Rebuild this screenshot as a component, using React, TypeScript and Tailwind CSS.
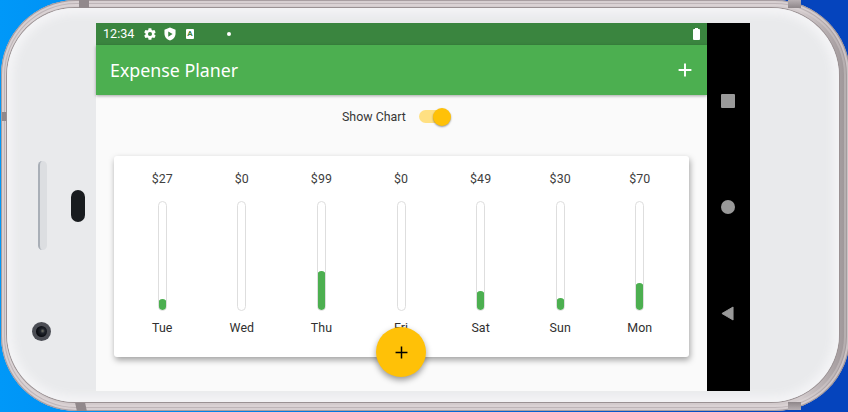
const days = [
  { day: 'Tue', amount: 27 },
  { day: 'Wed', amount: 0 },
  { day: 'Thu', amount: 99 },
  { day: 'Fri', amount: 0 },
  { day: 'Sat', amount: 49 },
  { day: 'Sun', amount: 30 },
  { day: 'Mon', amount: 70 },
];

const total = days.reduce((sum, d) => sum + d.amount, 0);

function DayBar({ day, amount }: { day: string; amount: number }) {
  return (
    <div className="flex flex-1 flex-col items-center text-[12.4px] leading-[14px] text-[#404040]">
      <div className="tracking-[0.1px]">${amount}</div>
      <div className="mt-[15px] flex h-[110px] w-[9px] flex-col justify-end overflow-hidden rounded-full border border-[#dedede] bg-white">
        <div
          className="-mx-px rounded-full bg-[#4caf50]"
          style={{ height: `${(amount / total) * 108}px` }}
        />
      </div>
      <div className="mt-[10px] tracking-[0.1px] text-[#303030]">{day}</div>
    </div>
  );
}

function Plus({ className }: { className: string }) {
  return (
    <svg viewBox="0 0 14 14" className={className} fill="none" stroke="currentColor">
      <path d="M7 .6v12.8M.6 7h12.8" />
    </svg>
  );
}

function StatusBar() {
  return (
    <div className="flex h-[22px] items-center bg-[#3a853f] pl-[7px] pr-[7px] text-white">
      <span className="w-[32px] pt-px text-[12.6px] leading-none">12:34</span>
      <svg viewBox="0 0 24 24" className="ml-[8px] h-[14px] w-[14px]" fill="currentColor">
        <path d="M19.4 13a7.5 7.5 0 0 0 0-2l2.1-1.6a.5.5 0 0 0 .1-.6l-2-3.5a.5.5 0 0 0-.6-.2l-2.500 1a7.300 7.300 0 0 0-1.700-1l-.4-2.700a.5.5 0 0 0-.5-.4h-4a.5.5 0 0 0-.5.4L9 5.100a7.300 7.300 0 0 0-1.700 1l-2.500-1a.5.5 0 0 0-.6.2l-2 3.500a.5.5 0 0 0 .1.6L4.500 11a7.500 7.500 0 0 0 0 2l-2.200 1.600a.5.5 0 0 0-.1.6l2 3.500c.1.2.4.3.6.2l2.500-1c.5.4 1.100.7 1.700 1l.4 2.700c0 .2.2.4.5.4h4c.2 0 .5-.2.5-.4l.4-2.700a7.300 7.300 0 0 0 1.700-1l2.500 1c.2.1.5 0 .6-.2l2-3.500a.5.5 0 0 0-.1-.6L19.400 13ZM12 15.500a3.500 3.500 0 1 1 0-7 3.500 3.500 0 0 1 0 7Z" fillRule="evenodd" />
      </svg>
      <svg viewBox="0 0 24 24" className="ml-[6px] h-[14px] w-[14px]" fill="currentColor">
        <path d="M12 1 2.500 4.500V11c0 5.500 4 10.500 9.500 12 5.500-1.500 9.500-6.500 9.500-12V4.500L12 1ZM9 7.500l7.500 4.500L9 16.500v-9Z" fillRule="evenodd" />
      </svg>
      <div className="ml-[9px] flex h-[10px] w-[8px] flex-col items-center rounded-[1px] bg-white">
        <span className="text-[8px] font-bold leading-[9px] text-[#3a853f]">A</span>
      </div>
      <div className="ml-[33px] h-[4px] w-[4px] rounded-full bg-white" />
      <div className="ml-auto flex w-[7px] flex-col items-center">
        <div className="h-px w-[3px] bg-white" />
        <div className="h-[11px] w-[7px] rounded-[1px] bg-white" />
      </div>
    </div>
  );
}

function Screen() {
  return (
    <div className="relative flex h-[368px] w-[611px] flex-col bg-[#fafafa]">
      <StatusBar />
      <header className="z-10 flex h-[50px] items-center justify-between bg-[#4caf50] pl-[14px] pr-[15px] text-white shadow-[0_1px_3px_rgba(0,0,0,0.35)]">
        <h1 className="pt-px font-[family-name:'Noto_Sans','Open_Sans',sans-serif] text-[17.8px] leading-none">Expense Planer</h1>
        <Plus className="h-[14px] w-[14px] stroke-[1.9]" />
      </header>
      <div className="flex h-[43px] items-center pl-[246px] text-[12.4px] text-[#363636]">
        <span className="w-[65px] whitespace-nowrap pt-px">Show Chart</span>
        <div className="ml-[12px] flex h-[13px] w-[32px] items-center justify-end rounded-l-full bg-[linear-gradient(90deg,#ffe082_22px,transparent_22px)]">
          <div className="h-[18px] w-[18px] rounded-full bg-[#ffc107] shadow-[0_1px_2px_rgba(0,0,0,0.4)]" />
        </div>
      </div>
      <section className="ml-[18px] mt-[18px] flex h-[201px] w-[575px] rounded-[3px] bg-white pl-[8.5px] pr-[9.5px] pt-[16px] shadow-[1px_3px_6px_rgba(0,0,0,0.36)]">
        {days.map((d) => (
          <DayBar key={d.day} {...d} />
        ))}
      </section>
      <button className="absolute bottom-[14px] left-[280px] flex h-[50px] w-[50px] items-center justify-center rounded-full bg-[#ffc107] text-black shadow-[0_3px_6px_rgba(0,0,0,0.4)]">
        <Plus className="h-[13px] w-[13px] stroke-[1.6]" />
      </button>
    </div>
  );
}

function NavBar() {
  return (
    <div className="flex h-[368px] w-[43px] flex-col items-center justify-between bg-black pb-[70px] pr-px pt-[71px]">
      <div className="h-[14px] w-[14px] rounded-[1px] bg-[#999]" />
      <div className="h-[14px] w-[14px] rounded-full bg-[#999]" />
      <svg viewBox="0 0 14 16" className="mr-[2px] h-[15px] w-[13px]">
        <path d="M13 1v14L1 8Z" fill="#999" stroke="#999" strokeLinejoin="round" />
      </svg>
    </div>
  );
}

export default function App() {
  return (
    <div className="relative h-[412px] w-[848px] overflow-hidden bg-[linear-gradient(90deg,#0098f8_0,#0090f4_90px,#0544bd_780px)] font-[family-name:Roboto,sans-serif]">
      <div className="ml-px h-[411px] w-[849px] rounded-[75px] bg-[linear-gradient(90deg,#d3cbcd_0,#d3cbcd_800px,#a0989a_843px)] pb-[9px] pl-[6px] pr-[11px] pt-[8px] shadow-[inset_0_0_0_1px_rgba(110,98,102,0.45),inset_0_0_0_3px_rgba(235,228,230,0.55),inset_0_0_0_4px_rgba(120,108,112,0.28),inset_0_0_0_6px_rgba(235,228,230,0.3)]">
        <div className="flex h-[394px] w-[832px] rounded-[68px] bg-[#e9eaec] pt-[15px] shadow-[0_0_0_1px_#9a9193,inset_0_0_8px_6px_#f4f4f6]">
          <div className="flex w-[89px] shrink-0">
            <div className="ml-[31px] flex w-[20px] flex-col">
              <div className="mt-[138px] h-[89px] w-[9px] rounded-full border-l-2 border-[#a9afb7] bg-[#dcdee1]" />
              <div className="-ml-[6px] mt-[72px] flex h-[19px] w-[19px] items-center justify-center rounded-full bg-[#4b4d54]">
                <div className="h-[11px] w-[11px] rounded-full bg-[radial-gradient(circle_at_60%_45%,#77776a_0,#20242c_25%,#090b10_65%)]" />
              </div>
            </div>
            <div className="ml-[13px] mt-[167px] h-[32px] w-[14px] rounded-full bg-[#191c1f]" />
          </div>
          <Screen />
          <NavBar />
        </div>
      </div>
      <div className="absolute left-[79px] top-0 h-[8px] w-[10px] bg-[#91898c]" />
      <div className="absolute left-[788px] top-0 h-[8px] w-[13px] bg-[linear-gradient(180deg,#b8b0b3,#8e8689)]" />
      <div className="absolute left-[76px] top-[403px] h-[8px] w-[10px] skew-x-12 bg-[#91898c]" />
      <div className="absolute left-[788px] top-[402px] h-[8px] w-[13px] bg-[linear-gradient(180deg,#8e8689,#b8b0b3)]" />
      <div className="absolute left-[2px] top-[112px] h-[9px] w-[4px] bg-[#91898c]" />
    </div>
  );
}
